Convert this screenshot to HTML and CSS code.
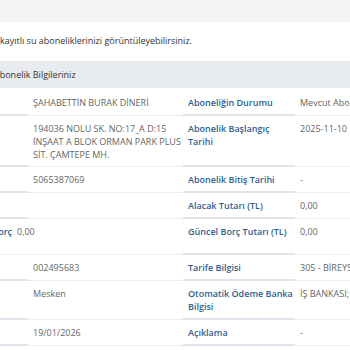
FILE: index.html
```html
<!DOCTYPE html>
<html lang="tr">
<head>
  <meta charset="UTF-8" />
  <meta name="viewport" content="width=device-width, initial-scale=1.0"/>
  <title>Aboneliklerim</title>
  <link rel="stylesheet" href="styles.css">
</head>
<body>
  <div class="topbar"></div>

  <div class="page">
    <p class="intro">kayıtlı su aboneliklerinizi görüntüleyebilirsiniz.</p>

    <div class="panel">
      <div class="panel-heading">Abonelik Bilgileriniz</div>

      <table class="info">
        <colgroup>
          <col class="c-label1">
          <col class="c-value1">
          <col class="c-label2">
          <col class="c-value2">
        </colgroup>
        <tr>
          <td class="label">Adı Soyadı</td>
          <td>ŞAHABETTİN BURAK DİNERİ</td>
          <td class="label">Aboneliğin Durumu</td>
          <td>Mevcut Abone</td>
        </tr>
        <tr>
          <td class="label">Adres</td>
          <td>194036 NOLU SK. NO:17_A D:15 İNŞAAT A BLOK ORMAN PARK PLUS SİT. ÇAMTEPE MH.</td>
          <td class="label">Abonelik Başlangıç Tarihi</td>
          <td>2025-11-10</td>
        </tr>
        <tr>
          <td class="label">Telefon</td>
          <td>5065387069</td>
          <td class="label">Abonelik Bitiş Tarihi</td>
          <td>-</td>
        </tr>
        <tr>
          <td class="label"></td>
          <td></td>
          <td class="label">Alacak Tutarı (TL)</td>
          <td>0,00</td>
        </tr>
        <tr class="debt">
          <td colspan="2"><span class="label debt-label">Toplam Borç</span><span class="debt-value">0,00</span></td>
          <td class="label">Güncel Borç Tutarı (TL)</td>
          <td>0,00</td>
        </tr>
        <tr>
          <td class="label">Abone No</td>
          <td>002495683</td>
          <td class="label">Tarife Bilgisi</td>
          <td>305 - BİREYSEL KONUT</td>
        </tr>
        <tr>
          <td class="label">Kullanım Türü</td>
          <td>Mesken</td>
          <td class="label">Otomatik Ödeme Banka Bilgisi</td>
          <td>İŞ BANKASI; 4543 **** 1234</td>
        </tr>
        <tr>
          <td class="label">Son Okuma</td>
          <td>19/01/2026</td>
          <td class="label">Açıklama</td>
          <td>-</td>
        </tr>
      </table>
    </div>
  </div>
</body>
</html>
```

FILE: styles.css
```css
body {
  margin: 0;
  overflow: hidden;
  font-family: "Open Sans", "Noto Sans", sans-serif;
  font-size: 9px;
  line-height: 13px;
  color: #555;
  background-color: #fff;
}
.topbar {
  height: 22px;
  background-color: #f3f4f6;
}
.page {
  margin-left: -20px;
}
.intro {
  margin: 0;
  padding: 12px 0 14px 20px;
  color: #333;
}
.panel-heading {
  padding: 7px 14px;
  background-color: #e9ecef;
  color: #333;
}
.info {
  margin-top: 2px;
  margin-left: -80px;
  border-collapse: separate;
  border-spacing: 0;
  table-layout: fixed;
  width: 595px;
}
.c-label1 { width: 128px; }
.c-value1 { width: 155px; }
.c-label2 { width: 112px; }
.c-value2 { width: 200px; }
.info td {
  padding: 6px 2px 5px 5px;
  text-align: left;
  vertical-align: top;
  color: #666;
  border-bottom: 1px solid #eceef1;
}
.info .label {
  font-weight: 600;
  color: #2f5f8f;
}
.info td.label {
  border-bottom: 2px solid #dde4ec;
}
.info tr.debt {
  height: 36px;
}
.debt-label {
  display: inline-block;
  width: 107px;
  text-align: right;
}
.debt-value {
  margin-left: 5px;
}
```
